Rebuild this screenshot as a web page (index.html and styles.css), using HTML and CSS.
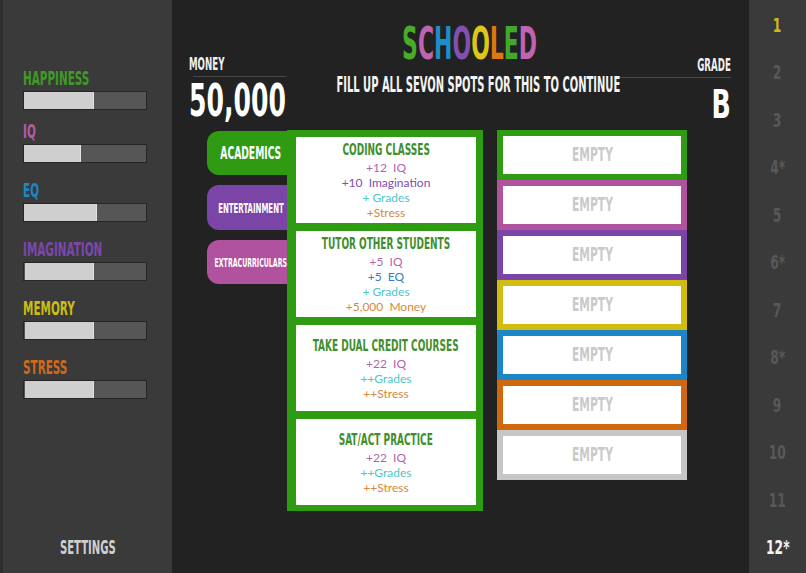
FILE: index.html
```html
<!DOCTYPE html>
<html lang="en">
<head>
<meta charset="utf-8">
<title>Schooled</title>
<link rel="stylesheet" href="styles.css">
</head>
<body>
<div class="app">
  <aside class="sidebar">
    <div class="stats">
      <div class="stat first">
        <div class="stat-label c-green"><span class="cond sx-label">HAPPINESS</span></div>
        <div class="bar"><div class="fill" style="width:57%"></div></div>
      </div>
      <div class="stat">
        <div class="stat-label c-pink"><span class="cond sx-label">IQ</span></div>
        <div class="bar"><div class="fill" style="width:47%"></div></div>
      </div>
      <div class="stat">
        <div class="stat-label c-blue"><span class="cond sx-label">EQ</span></div>
        <div class="bar"><div class="fill" style="width:60%"></div></div>
      </div>
      <div class="stat">
        <div class="stat-label c-purple"><span class="cond sx-label">IMAGINATION</span></div>
        <div class="bar inset"><div class="fill" style="width:57%"></div></div>
      </div>
      <div class="stat">
        <div class="stat-label c-yellow"><span class="cond sx-label">MEMORY</span></div>
        <div class="bar inset"><div class="fill" style="width:57%"></div></div>
      </div>
      <div class="stat">
        <div class="stat-label c-orange"><span class="cond sx-label">STRESS</span></div>
        <div class="bar inset"><div class="fill" style="width:57%"></div></div>
      </div>
    </div>
    <div class="settings"><span class="cond sx-settings mid">SETTINGS</span></div>
  </aside>

  <main class="main">
    <header class="top">
      <div class="money">
        <div class="small-label"><span class="cond sx-small">MONEY</span></div>
        <div class="rule money-rule"></div>
        <div class="big-value"><span class="cond sx-big">50,000</span></div>
      </div>
      <div class="center">
        <h1 class="title"><span class="cond sx-title mid"><span class="t-green">S</span><span class="t-pink">C</span><span class="t-blue">H</span><span class="t-purple">O</span><span class="t-yellow">O</span><span class="t-orange">L</span><span class="t-green2">E</span><span class="t-pink">D</span></span></h1>
        <p class="subtitle"><span class="cond sx-sub mid">FILL UP ALL SEVON SPOTS FOR THIS TO CONTINUE</span></p>
      </div>
      <div class="grade">
        <div class="small-label right"><span class="cond sx-small end">GRADE</span></div>
        <div class="rule"></div>
        <div class="grade-value right"><span class="cond sx-grade end">B</span></div>
      </div>
    </header>

    <section class="board">
      <nav class="tabs">
        <div class="tab tab-academics"><span class="cond sx-tab1 mid">ACADEMICS</span></div>
        <div class="tab tab-entertainment"><span class="cond sx-tab2 mid">ENTERTAINMENT</span></div>
        <div class="tab tab-extra"><span class="cond sx-tab3 mid">EXTRACURRICULARS</span></div>
      </nav>

      <div class="panel">
        <div class="card">
          <div class="card-title"><span class="cond sx-card mid">CODING CLASSES</span></div>
          <div class="eff c-iq">+12&nbsp; IQ</div>
          <div class="eff c-imag">+10&nbsp; Imagination</div>
          <div class="eff c-grades">+ Grades</div>
          <div class="eff c-stress">+Stress</div>
        </div>
        <div class="card">
          <div class="card-title"><span class="cond sx-card mid">TUTOR OTHER STUDENTS</span></div>
          <div class="eff c-iq">+5&nbsp; IQ</div>
          <div class="eff c-eq">+5&nbsp; EQ</div>
          <div class="eff c-grades">+ Grades</div>
          <div class="eff c-stress">+5,000&nbsp; Money</div>
        </div>
        <div class="card">
          <div class="card-title"><span class="cond sx-card mid">TAKE DUAL CREDIT COURSES</span></div>
          <div class="eff c-iq">+22&nbsp; IQ</div>
          <div class="eff c-grades">++Grades</div>
          <div class="eff c-stress">++Stress</div>
        </div>
        <div class="card">
          <div class="card-title"><span class="cond sx-card mid">SAT/ACT PRACTICE</span></div>
          <div class="eff c-iq">+22&nbsp; IQ</div>
          <div class="eff c-grades">++Grades</div>
          <div class="eff c-stress">++Stress</div>
        </div>
      </div>

      <div class="slots">
        <div class="slot s-green"><span class="cond sx-empty mid">EMPTY</span></div>
        <div class="slot s-pink"><span class="cond sx-empty mid">EMPTY</span></div>
        <div class="slot s-purple"><span class="cond sx-empty mid">EMPTY</span></div>
        <div class="slot s-yellow"><span class="cond sx-empty mid">EMPTY</span></div>
        <div class="slot s-blue"><span class="cond sx-empty mid">EMPTY</span></div>
        <div class="slot s-orange"><span class="cond sx-empty mid">EMPTY</span></div>
        <div class="slot s-gray"><span class="cond sx-empty mid">EMPTY</span></div>
      </div>
    </section>
  </main>

  <nav class="levels">
    <div class="lvl current"><span class="cond sx-lvl mid">1</span></div>
    <div class="lvl"><span class="cond sx-lvl mid">2</span></div>
    <div class="lvl"><span class="cond sx-lvl mid">3</span></div>
    <div class="lvl"><span class="cond sx-lvl mid">4*</span></div>
    <div class="lvl"><span class="cond sx-lvl mid">5</span></div>
    <div class="lvl"><span class="cond sx-lvl mid">6*</span></div>
    <div class="lvl"><span class="cond sx-lvl mid">7</span></div>
    <div class="lvl"><span class="cond sx-lvl mid">8*</span></div>
    <div class="lvl"><span class="cond sx-lvl mid">9</span></div>
    <div class="lvl"><span class="cond sx-lvl mid">10</span></div>
    <div class="lvl"><span class="cond sx-lvl mid">11</span></div>
    <div class="lvl final"><span class="cond sx-lvl mid">12*</span></div>
  </nav>
</div>
</body>
</html>
```
FILE: styles.css
```css
* { box-sizing: border-box; }

html, body {
  margin: 0;
  padding: 0;
  width: 806px;
  height: 573px;
  overflow: hidden;
  background: #222222;
}

.app {
  display: flex;
  width: 806px;
  height: 573px;
}

/* condensed display text */
.cond {
  display: inline-block;
  font-family: "Liberation Sans Narrow", "DejaVu Sans Condensed", "Liberation Sans", sans-serif;
  font-weight: 700;
  white-space: nowrap;
  transform-origin: left center;
  transform: scaleX(var(--sx, 0.6));
}
.cond.mid { transform-origin: center center; }
.cond.end { transform-origin: right center; }

.sx-label { --sx: 0.595; }
.sx-settings { --sx: 0.56; }
.sx-small { --sx: 0.535; }
.sx-big { --sx: 0.62; }
.sx-title { --sx: 0.555; }
.sx-sub { --sx: 0.527; }
.sx-grade { --sx: 0.72; }
.sx-tab1 { --sx: 0.60; }
.sx-tab2 { --sx: 0.575; }
.sx-tab3 { --sx: 0.535; }
.sx-card { --sx: 0.605; }
.sx-empty { --sx: 0.61; }
.sx-lvl { --sx: 0.70; }

/* ---------- left sidebar ---------- */
.sidebar {
  width: 172px;
  flex: none;
  background: #3a3a3a;
  border-left: 3px solid #2e2e2e;
  display: flex;
  flex-direction: column;
  padding: 69px 0 16px 20px;
}

.stats {
  display: flex;
  flex-direction: column;
  gap: 18px;
}
.stat.first { margin-bottom: -6px; }

.stat-label {
  font-size: 19.5px;
  line-height: 20px;
  height: 20px;
}

.bar {
  margin-top: 2px;
  width: 124px;
  height: 19px;
  background: #565656;
  border: 1px solid #262626;
}
.bar.inset { padding-left: 1px; }
.fill {
  height: 100%;
  background: #cfcfcf;
  border-right: 1px solid #e2e2e2;
}

.c-green { color: #3f9a25; }
.c-pink { color: #b85aa6; }
.c-blue { color: #1f86c4; }
.c-purple { color: #7a47ad; }
.c-yellow { color: #cbbd15; }
.c-orange { color: #d0691c; }

.settings {
  margin-top: auto;
  margin-left: -20px;
  display: flex;
  justify-content: center;
  font-size: 20px;
  line-height: 20px;
  color: #cfcfcf;
}

/* ---------- main ---------- */
.main {
  width: 577px;
  flex: none;
  background: #222222;
  display: flex;
  flex-direction: column;
}

.top {
  height: 130px;
  display: flex;
  padding: 0 18px 0 17px;
  color: #f4f4f4;
}

.money {
  width: 97px;
  flex: none;
  padding-top: 55px;
}
.small-label {
  font-size: 18px;
  line-height: 18px;
  height: 18px;
  color: #f0f0f0;
}
.right { text-align: right; }

.rule {
  margin-top: 3px;
  height: 1px;
  background: #474747;
}
.money-rule { margin-left: 4px; }

.big-value {
  margin-top: 1px;
  font-size: 45px;
  line-height: 45px;
  color: #ffffff;
}

.center {
  flex: 1;
  min-width: 0;
  display: flex;
  flex-direction: column;
  align-items: center;
  padding-left: 34px;
  padding-top: 22px;
}
.title {
  margin: 0;
  font-size: 44px;
  line-height: 44px;
  font-weight: 700;
  display: flex;
  justify-content: center;
}
.subtitle {
  margin: 9px 0 0;
  padding-left: 16px;
  font-size: 21px;
  line-height: 21px;
  color: #f4f4f4;
  display: flex;
  justify-content: center;
}

.t-green { color: #48ab2a; }
.t-green2 { color: #42a82a; }
.t-pink { color: #c262b2; }
.t-blue { color: #1f8ccb; }
.t-purple { color: #8050b3; }
.t-yellow { color: #ddc71a; }
.t-orange { color: #de7612; }

.grade {
  width: 111px;
  flex: none;
  padding-top: 56px;
}
.grade-value {
  margin-top: 7px;
  font-size: 39px;
  line-height: 39px;
  color: #ffffff;
}

/* ---------- board ---------- */
.board {
  display: flex;
  align-items: flex-start;
  padding-left: 35px;
}

.tabs {
  width: 80px;
  flex: none;
  margin-top: 1px;
  display: flex;
  flex-direction: column;
  gap: 10px;
}
.tab {
  height: 44px;
  border-radius: 12px 0 0 12px;
  display: flex;
  align-items: center;
  justify-content: center;
  padding-left: 7px;
  color: #ffffff;
}
.tab-academics {
  background: #2e9b12;
  font-size: 17px;
}
.tab-entertainment {
  background: #7b45a8;
  font-size: 13.5px;
  height: 45px;
}
.tab-extra {
  background: #b0529e;
  font-size: 13px;
}

.panel {
  width: 196px;
  flex: none;
  background: #2e9b12;
  padding: 7px 7px 6px 9px;
  display: flex;
  flex-direction: column;
  gap: 8px;
}

.card {
  height: 86px;
  background: #ffffff;
  display: flex;
  flex-direction: column;
  align-items: center;
  justify-content: center;
  font-family: Lato, "Noto Sans", sans-serif;
  font-size: 12px;
  line-height: 15px;
}
.card-title {
  font-size: 16.5px;
  line-height: 20px;
  color: #3f8f2d;
  display: flex;
  justify-content: center;
}
.eff { white-space: nowrap; }
.c-iq { color: #b464ad; }
.c-imag { color: #7a50ad; }
.c-grades { color: #4cc6c6; }
.c-stress { color: #d6893c; }
.c-eq { color: #2f7fc0; }

.slots {
  width: 190px;
  flex: none;
  margin-left: 14px;
  display: flex;
  flex-direction: column;
}
.slot {
  height: 50px;
  border: 6px solid #2e9b12;
  background: #ffffff;
  display: flex;
  align-items: center;
  justify-content: center;
  font-size: 19.5px;
  line-height: 20px;
  color: #cacaca;
}
.s-green { border-color: #2e9b12; }
.s-pink { border-color: #b0529e; }
.s-purple { border-color: #7b45a8; }
.s-yellow { border-color: #d2bd0f; }
.s-blue { border-color: #1b86c7; }
.s-orange { border-color: #d0680f; }
.s-gray { border-color: #c6c6c6; }

/* ---------- right level column ---------- */
.levels {
  width: 57px;
  flex: none;
  background: #3a3a3a;
  padding-top: 1.5px;
  display: flex;
  flex-direction: column;
}
.lvl {
  height: 47.5px;
  line-height: 47.5px;
  font-size: 19.5px;
  color: #585858;
  display: flex;
  justify-content: center;
}
.lvl.current { color: #cbbb22; }
.lvl.final { color: #f2f2f2; }
```
